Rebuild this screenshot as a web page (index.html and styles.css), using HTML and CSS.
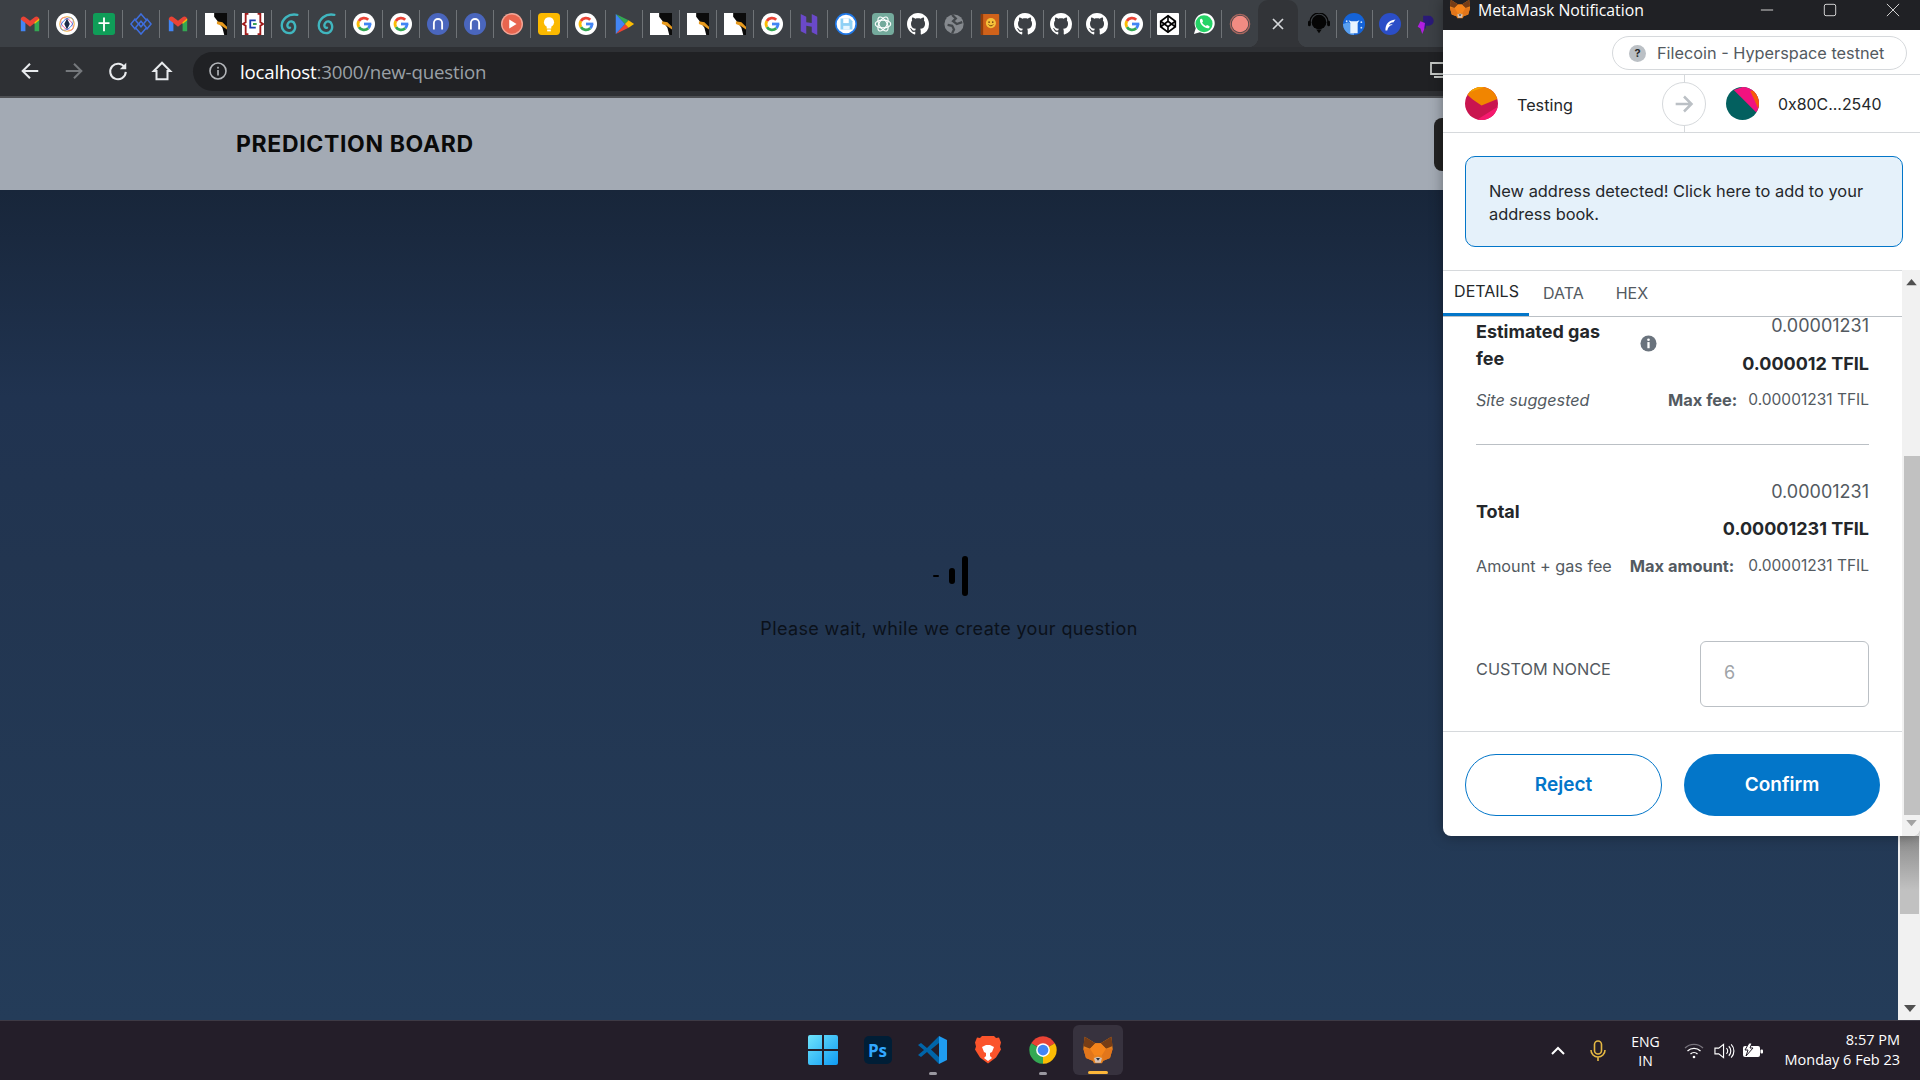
FILE: index.html
```html
<!DOCTYPE html>
<html lang="en">
<head>
<meta charset="utf-8">
<title>Prediction Board</title>
<link rel="stylesheet" href="styles.css">
</head>
<body>
<svg class="defs" aria-hidden="true">
  <symbol id="gm" viewBox="0 0 24 24"><path d="M2 20V6l5 4v10z" fill="#4285f4"/><path d="M17 20V10l5-4v14z" fill="#34a853"/><path d="M2 7c0-3 3-4 5-2.5l5 4 5-4C19 3 22 4 22 7l-5 4-5 4-5-4z" fill="#ea4335"/><path d="M17 10l5-4v2l-5 4z" fill="#fbbc04"/></symbol>
  <symbol id="multi" viewBox="0 0 24 24"><circle cx="12" cy="12" r="12" fill="#fff"/><ellipse cx="12" cy="12" rx="8.5" ry="5" fill="none" stroke="#e65a9c" transform="rotate(45 12 12)"/><ellipse cx="12" cy="12" rx="8.5" ry="5" fill="none" stroke="#3f7de8" transform="rotate(-45 12 12)"/><circle cx="12" cy="12" r="8" fill="none" stroke="#f4b33f"/><path d="M12 6l3 6-3 6-3-6z" fill="#1c2b4a"/></symbol>
  <symbol id="cross" viewBox="0 0 24 24"><rect width="24" height="24" rx="3" fill="#0f9d58"/><path d="M11 5h2v5h5v2h-5v8h-2v-8H6v-2h5z" fill="#fff"/></symbol>
  <symbol id="diamond" viewBox="0 0 24 24"><g fill="none" stroke="#3f6fe0" stroke-width="1.6"><path d="M12 1l6 7-6 7-6-7z"/><path d="M12 9l6 7-6 7-6-7z"/><path d="M6 6l-5 6 5 6M18 6l5 6-5 6"/></g></symbol>
  <symbol id="gull" viewBox="0 0 24 24"><rect width="24" height="24" fill="#fff"/><path d="M10 0h14v24h-3l-2-8-3-4-3-4-3-4z" fill="#0b0b0b"/><path d="M13 9l6 1 5 5v3l-6-4-5-2z" fill="#e79a1e"/></symbol>
  <symbol id="brace" viewBox="0 0 24 24"><rect width="24" height="24" fill="#fff"/><path d="M7 1H4v9l-3 2 3 2v9h3M17 1h3v9l3 2-3 2v9h-3" fill="none" stroke="#a01a1a" stroke-width="2"/><path d="M15 8H9v8h6" fill="none" stroke="#1a3fb0" stroke-width="2"/><rect x="12" y="11" width="4" height="2" fill="#2c9a4a"/></symbol>
  <symbol id="swirl" viewBox="0 0 24 24"><path d="M20 2C10 0 3 7 3 14c0 5 4 8 8 8 5 0 8-5 6-10-1-3-5-4-7-1-2 3 0 6 2 5" fill="none" stroke="#40b6bf" stroke-width="2.6" stroke-linecap="round"/></symbol>
  <symbol id="g" viewBox="0 0 24 24"><circle cx="12" cy="12" r="12" fill="#fff"/><g fill="none" stroke-width="3"><path d="M18.5 12A6.5 6.5 0 0 1 16.6 16.6" stroke="#4285f4"/><path d="M16.6 16.6A6.5 6.5 0 0 1 6.4 15.3" stroke="#34a853"/><path d="M6.4 15.3A6.5 6.5 0 0 1 6.4 8.7" stroke="#fbbc04"/><path d="M6.4 8.7A6.5 6.5 0 0 1 16.6 7.4" stroke="#ea4335"/></g><rect x="12" y="10.5" width="8" height="3" fill="#4285f4"/></symbol>
  <symbol id="arch" viewBox="0 0 24 24"><circle cx="12" cy="12" r="12" fill="#4a66bd"/><path d="M7.5 18V11a4.5 4.5 0 0 1 9 0v7" fill="none" stroke="#fff" stroke-width="2"/></symbol>
  <symbol id="playred" viewBox="0 0 24 24"><circle cx="12" cy="12" r="12" fill="#f3a596"/><circle cx="12" cy="12" r="10.5" fill="#e8654f"/><path d="M9 7l8 5-8 5z" fill="#fff"/></symbol>
  <symbol id="bulb" viewBox="0 0 24 24"><rect width="24" height="24" rx="4" fill="#fbb900"/><circle cx="12" cy="10" r="5.5" fill="#fff"/><rect x="9.5" y="14" width="5" height="3" fill="#fff"/><rect x="10" y="18" width="4" height="2" fill="#fff"/></symbol>
  <symbol id="gplay" viewBox="0 0 24 24"><path d="M3 1l14 7-4 4z" fill="#34a853"/><path d="M3 23l10-11 4 4z" fill="#ea4335"/><path d="M17 8l6 4-6 4-4-4z" fill="#fbbc04"/><path d="M3 1v22l10-11z" fill="#4285f4"/></symbol>
  <symbol id="hh" viewBox="0 0 24 24"><path d="M3 1l6 3v6l6 1V1l6 3v9l-18-1zM3 12l18 1v11l-6-3v-6l-6-1v9l-6-3z" fill="#6a49c9"/></symbol>
  <symbol id="floppy" viewBox="0 0 24 24"><circle cx="12" cy="12" r="12" fill="#1f78e8"/><circle cx="12" cy="12" r="10.2" fill="#fff"/><path d="M6 6h10l3 3v9H6z" fill="#8fd0f5"/><rect x="9" y="6" width="6" height="5" fill="#fff"/><rect x="9" y="14" width="7" height="4" fill="#e7f6ff"/></symbol>
  <symbol id="gpt" viewBox="0 0 24 24"><rect width="24" height="24" rx="4" fill="#74aa9c"/><g fill="none" stroke="#fff" stroke-width="1.2"><ellipse cx="12" cy="12" rx="8.5" ry="4.2"/><ellipse cx="12" cy="12" rx="8.5" ry="4.2" transform="rotate(60 12 12)"/><ellipse cx="12" cy="12" rx="8.5" ry="4.2" transform="rotate(120 12 12)"/></g></symbol>
  <symbol id="gh" viewBox="0 0 16 16"><path fill="#fff" d="M8 0C3.58 0 0 3.58 0 8c0 3.54 2.29 6.53 5.47 7.59.4.07.55-.17.55-.38 0-.19-.01-.82-.01-1.49-2.01.37-2.53-.49-2.69-.94-.09-.23-.48-.94-.82-1.13-.28-.15-.68-.52-.01-.53.63-.01 1.08.58 1.23.82.72 1.21 1.87.87 2.33.66.07-.52.28-.87.51-1.07-1.78-.2-3.64-.89-3.64-3.95 0-.87.31-1.59.82-2.15-.08-.2-.36-1.02.08-2.12 0 0 .67-.21 2.2.82.64-.18 1.32-.27 2-.27.68 0 1.36.09 2 .27 1.53-1.04 2.2-.82 2.2-.82.44 1.1.16 1.92.08 2.12.51.56.82 1.27.82 2.15 0 3.07-1.87 3.75-3.65 3.95.29.25.54.73.54 1.48 0 1.07-.01 1.93-.01 2.2 0 .21.15.46.55.38A8.013 8.013 0 0016 8c0-4.42-3.58-8-8-8z"/></symbol>
  <symbol id="globe" viewBox="0 0 24 24"><circle cx="12" cy="12" r="10.5" fill="#85898e"/><path d="M10 2l4 4-3 3 4 3 6-2M5 13l5 1 2 4-2 4" fill="none" stroke="#43474b" stroke-width="2.5"/></symbol>
  <symbol id="book" viewBox="0 0 24 24"><rect x="2" y="1" width="20" height="23" rx="1" fill="#d0621a"/><rect x="2" y="1" width="2.5" height="23" fill="#8f3d0c"/><circle cx="13" cy="11" r="5.5" fill="#f6c23a"/><circle cx="11" cy="10" r=".9" fill="#6b3b10"/><circle cx="15" cy="10" r=".9" fill="#6b3b10"/><path d="M10.5 12.5c1 2 4 2 5 0" fill="none" stroke="#6b3b10"/></symbol>
  <symbol id="codepen" viewBox="0 0 24 24"><rect width="24" height="24" rx="1" fill="#fff"/><g fill="none" stroke="#000" stroke-width="1.8"><path d="M12 3l8 6v6l-8 6-8-6V9z"/><path d="M4 9l8 6 8-6M4 15l8-6 8 6M12 3v6M12 15v6"/></g></symbol>
  <symbol id="wa" viewBox="0 0 24 24"><path d="M1 23l2-6.5A11 11 0 1 1 7.500 21z" fill="#fff"/><circle cx="12" cy="11.800" r="9.300" fill="#25d366"/><path d="M8 6.500l1.800-.3 1.200 2.900-1 1.300c.9 1.800 2.200 3 4 3.800l1.300-1.200 2.800 1.400-.4 1.900c-4.800 1.500-12-5.300-9.700-9.800z" fill="#fff"/></symbol>
  <symbol id="rec" viewBox="0 0 24 24"><circle cx="12" cy="12" r="9" fill="#f28b82"/><circle cx="12" cy="12" r="10.500" fill="none" stroke="#a8665f" stroke-width="1.500"/></symbol>
  <symbol id="head" viewBox="0 0 24 24"><circle cx="12" cy="10" r="8" fill="#050505"/><path d="M2 13V10a10 10 0 0 1 20 0v3" fill="none" stroke="#050505" stroke-width="1.500"/><rect x="0" y="8.500" width="3" height="6" rx="1.500" fill="#050505"/><rect x="21" y="8.500" width="3" height="6" rx="1.500" fill="#050505"/><path d="M9 18h6l-3 4z" fill="#050505"/></symbol>
  <symbol id="llama" viewBox="0 0 24 24"><circle cx="12" cy="12" r="12" fill="#1463d8"/><path d="M0 12a12 12 0 0 0 12 12V14L6 10z" fill="#5aa0ef"/><path d="M8 22V11L6 8l3 1h6l3-1-2 3v11z" fill="#e8f4ff"/><circle cx="4" cy="9" r="1" fill="#cfe6ff"/><circle cx="20" cy="10" r="1" fill="#cfe6ff"/><circle cx="20" cy="16" r="1" fill="#cfe6ff"/></symbol>
  <symbol id="fin" viewBox="0 0 24 24"><circle cx="12" cy="12" r="12" fill="#2b4ec7"/><path d="M7 19c0-7 3-11 11-12-2 2-2 3-2 3-3 0-5 2-5 3 2-1 3-1 4 0-3 0-5 2-6 6z" fill="#fff"/></symbol>
  <symbol id="pp" viewBox="0 0 24 24"><path d="M10 3h6a5 5 0 0 1 0 11h-3v3h-3z" fill="#2a1a78"/><path d="M7 9l5 2-1 7-2 5-2-6-3-2z" fill="#b01ee0"/></symbol>
  <symbol id="fox" viewBox="0 0 24 24"><path d="M2 2l8 5h4l8-5 1 9-2 7-5 2-1 2H9l-1-2-5-2-2-7z" fill="#e8821e"/><path d="M2 2l8 5-4 4-5-2zM22 2l-8 5 4 4 5-2z" fill="#763d16"/><path d="M6 11l4-4h4l4 4-3 5H9z" fill="#f6851b"/><path d="M1 11l5 0 3 5-1 4-5-2zM23 11h-5l-3 5 1 4 5-2z" fill="#e2761b"/><path d="M9 18l3-1 3 1-1 3.500h-4z" fill="#d7c1b3"/><path d="M10.500 18h3L12 20z" fill="#233447"/></symbol>
</svg>

<div class="browser">
  <div class="tabstrip">
    <span class="tab"><svg class="fav"><use href="#gm"/></svg></span>
    <span class="tab"><svg class="fav"><use href="#multi"/></svg></span>
    <span class="tab"><svg class="fav"><use href="#cross"/></svg></span>
    <span class="tab"><svg class="fav"><use href="#diamond"/></svg></span>
    <span class="tab"><svg class="fav"><use href="#gm"/></svg></span>
    <span class="tab"><svg class="fav"><use href="#gull"/></svg></span>
    <span class="tab"><svg class="fav"><use href="#brace"/></svg></span>
    <span class="tab"><svg class="fav"><use href="#swirl"/></svg></span>
    <span class="tab"><svg class="fav"><use href="#swirl"/></svg></span>
    <span class="tab"><svg class="fav"><use href="#g"/></svg></span>
    <span class="tab"><svg class="fav"><use href="#g"/></svg></span>
    <span class="tab"><svg class="fav"><use href="#arch"/></svg></span>
    <span class="tab"><svg class="fav"><use href="#arch"/></svg></span>
    <span class="tab"><svg class="fav"><use href="#playred"/></svg></span>
    <span class="tab"><svg class="fav"><use href="#bulb"/></svg></span>
    <span class="tab"><svg class="fav"><use href="#g"/></svg></span>
    <span class="tab"><svg class="fav"><use href="#gplay"/></svg></span>
    <span class="tab"><svg class="fav"><use href="#gull"/></svg></span>
    <span class="tab"><svg class="fav"><use href="#gull"/></svg></span>
    <span class="tab"><svg class="fav"><use href="#gull"/></svg></span>
    <span class="tab"><svg class="fav"><use href="#g"/></svg></span>
    <span class="tab"><svg class="fav"><use href="#hh"/></svg></span>
    <span class="tab"><svg class="fav"><use href="#floppy"/></svg></span>
    <span class="tab tab-narrow"><svg class="fav"><use href="#gpt"/></svg></span>
    <span class="tab tab-narrow"><svg class="fav"><use href="#gh"/></svg></span>
    <span class="tab tab-narrow"><svg class="fav"><use href="#globe"/></svg></span>
    <span class="tab tab-narrow"><svg class="fav"><use href="#book"/></svg></span>
    <span class="tab tab-narrow"><svg class="fav"><use href="#gh"/></svg></span>
    <span class="tab tab-narrow"><svg class="fav"><use href="#gh"/></svg></span>
    <span class="tab tab-narrow"><svg class="fav"><use href="#gh"/></svg></span>
    <span class="tab tab-narrow"><svg class="fav"><use href="#g"/></svg></span>
    <span class="tab tab-narrow"><svg class="fav"><use href="#codepen"/></svg></span>
    <span class="tab tab-narrow"><svg class="fav"><use href="#wa"/></svg></span>
    <span class="tab tab-narrow tab-plain"><svg class="fav"><use href="#rec"/></svg></span>
    <span class="tab-active"><svg class="close-x" viewBox="0 0 14 14"><path d="M2 2l10 10M12 2L2 12" stroke="#d5d7da" stroke-width="1.700"/></svg></span>
    <span class="tab tab-after"><svg class="fav"><use href="#head"/></svg></span>
    <span class="tab tab-after"><svg class="fav"><use href="#llama"/></svg></span>
    <span class="tab tab-after"><svg class="fav"><use href="#fin"/></svg></span>
    <span class="tab tab-after"><svg class="fav"><use href="#pp"/></svg></span>
  </div>

  <div class="toolbar">
    <svg class="tool" viewBox="0 0 24 24"><path d="M21 12H4M12 4l-8 8 8 8" fill="none" stroke="#e8eaed" stroke-width="2.200"/></svg>
    <svg class="tool" viewBox="0 0 24 24"><path d="M3 12h17M12 4l8 8-8 8" fill="none" stroke="#75787c" stroke-width="2.200"/></svg>
    <svg class="tool" viewBox="0 0 24 24"><path d="M19.500 8.500A8.500 8.500 0 1 0 20.500 13" fill="none" stroke="#e8eaed" stroke-width="2.200"/><path d="M21 3v7h-7z" fill="#e8eaed"/></svg>
    <svg class="tool" viewBox="0 0 24 24"><path d="M12 3L3 12h3v9h12v-9h3z" fill="none" stroke="#e8eaed" stroke-width="2.200"/></svg>
    <div class="omnibox">
      <svg class="info" viewBox="0 0 20 20"><circle cx="10" cy="10" r="8" fill="none" stroke="#b4b7bb" stroke-width="1.600"/><rect x="9.200" y="9" width="1.600" height="5.500" fill="#b4b7bb"/><rect x="9.200" y="5.800" width="1.600" height="1.800" fill="#b4b7bb"/></svg>
      <span class="url"><span class="host">localhost</span>:3000/new-question</span>
      <svg class="cast" viewBox="0 0 20 20"><path d="M2 2h14v11H2zM5 16h9" fill="none" stroke="#c4c7c5" stroke-width="1.800"/></svg>
    </div>
  </div>

  <div class="viewport">
    <div class="page">
      <header class="app-header">
        <h1 class="brand">PREDICTION BOARD</h1>
        <span class="connect"></span>
      </header>
      <main class="app-main">
        <div class="spinner"><i class="bar bar-a"></i><i class="bar bar-b"></i><i class="bar bar-c"></i></div>
        <p class="wait">Please wait, while we create your question</p>
      </main>
    </div>
    <div class="page-scroll">
      <span class="page-thumb"></span>
      <svg class="page-arrow" viewBox="0 0 12 8"><path d="M0 0h12L6 7z" fill="#505050"/></svg>
    </div>
  </div>

  <footer class="taskbar">
    <div></div>
    <div class="task-apps">
      <span class="task-app">
        <svg class="task-icon" viewBox="0 0 30 30"><defs><linearGradient id="win" x1="0" y1="0" x2="1" y2="1"><stop offset="0" stop-color="#6fe4fb"/><stop offset="1" stop-color="#0f9bf3"/></linearGradient></defs><path d="M0 2a2 2 0 0 1 2-2h12v14H0zM16 0h12a2 2 0 0 1 2 2v12H16zM0 16h14v14H2a2 2 0 0 1-2-2zM16 16h14v12a2 2 0 0 1-2 2H16z" fill="url(#win)"/></svg>
      </span>
      <span class="task-app"><span class="ps">Ps</span></span>
      <span class="task-app task-running">
        <svg class="task-icon" viewBox="0 0 30 30"><path d="M21 1l8 4v20l-8 4z" fill="#1f9cf0"/><path d="M21 1L9 13 3 8 0 10l6 5-6 5 3 2 6-5 12 12 0-7-8-7.500L21 8z" fill="#0065a9"/></svg>
      </span>
      <span class="task-app">
        <svg class="task-icon" viewBox="0 0 30 30"><path d="M9 1h12l2 2 3-.500 2 5-1 4 1 3-5 8-8 6-8-6-5-8 1-3-1-4 2-5 3 .500z" fill="#fb542b"/><path d="M9 12l4-2h4l4 2-2 5-2 1v3l2 2-4 3-4-3 2-2v-3l-2-1z" fill="#fff"/></svg>
      </span>
      <span class="task-app task-running">
        <svg class="task-icon" viewBox="0 0 24 24"><path d="M12 12L2.500 6.500A11 11 0 0 1 21.500 6.500Z" fill="#ea4335"/><path d="M12 12L21.500 6.500A11 11 0 0 1 12 23Z" fill="#fbbc04"/><path d="M12 12L12 23A11 11 0 0 1 2.500 6.500Z" fill="#34a853"/><circle cx="12" cy="12" r="5.500" fill="#fff"/><circle cx="12" cy="12" r="4.300" fill="#4285f4"/></svg>
      </span>
      <span class="task-app task-active">
        <svg class="task-icon task-fox"><use href="#fox"/></svg>
      </span>
    </div>
    <div class="tray">
      <svg class="tray-icon chevron" viewBox="0 0 16 16"><path d="M2 11l6-6 6 6" fill="none" stroke="#fff" stroke-width="2"/></svg>
      <svg class="tray-icon mic" viewBox="0 0 20 24"><rect x="6.500" y="2" width="7" height="13" rx="3.500" fill="none" stroke="#e5b843" stroke-width="1.600"/><path d="M3 11a7 7 0 0 0 14 0M10 18v4" fill="none" stroke="#e5b843" stroke-width="1.600"/></svg>
      <span class="lang">ENG<br>IN</span>
      <svg class="tray-icon wifi" viewBox="0 0 20 16"><path d="M1 5a13 13 0 0 1 18 0" fill="none" stroke="#77737c" stroke-width="1.300"/><path d="M3.500 8a9.500 9.500 0 0 1 13 0M6.500 11a5 5 0 0 1 7 0" fill="none" stroke="#fff" stroke-width="1.300"/><circle cx="10" cy="14" r="1.300" fill="#fff"/></svg>
      <svg class="tray-icon speaker" viewBox="0 0 22 18"><path d="M1 6h4l5-4v14l-5-4H1z" fill="none" stroke="#fff" stroke-width="1.200"/><path d="M13 6a4 4 0 0 1 0 6M15.500 4a7 7 0 0 1 0 10M18 2a10 10 0 0 1 0 14" fill="none" stroke="#fff" stroke-width="1.200"/></svg>
      <svg class="tray-icon battery" viewBox="0 0 22 16"><rect x="1" y="3" width="17" height="11" rx="2" fill="#fff"/><rect x="18.500" y="6.500" width="2.500" height="4" rx="1" fill="#fff"/><path d="M7 0L3 7h3l-2 6 7-8H8l2-5z" fill="#fff" stroke="#231d28"/></svg>
      <div class="clock"><span>8:57 PM</span><span>Monday 6 Feb 23</span></div>
    </div>
  </footer>
</div>

<section class="popup">
  <div class="titlebar">
    <svg class="title-fox"><use href="#fox"/></svg>
    <span class="title-text">MetaMask Notification</span>
    <div class="win-btns">
      <svg class="win-btn" viewBox="0 0 16 16"><path d="M1 8h14" stroke="#e8e8e8" stroke-width="1"/></svg>
      <svg class="win-btn" viewBox="0 0 16 16"><rect x="1.500" y="1.500" width="13" height="13" rx="2" fill="none" stroke="#e8e8e8"/></svg>
      <svg class="win-btn" viewBox="0 0 16 16"><path d="M1 1l14 14M15 1L1 15" stroke="#e8e8e8"/></svg>
    </div>
  </div>
  <div class="network-row">
    <div class="network-pill"><span class="q">?</span><span>Filecoin - Hyperspace testnet</span></div>
  </div>
  <div class="accounts">
    <div class="acct acct-from">
      <svg class="avatar" viewBox="0 0 34 34"><defs><clipPath id="c1"><circle cx="17" cy="17" r="17"/></clipPath></defs><g clip-path="url(#c1)"><rect width="34" height="34" fill="#c9154f"/><path d="M0 0h34v12L17 19 8 13 0 6z" fill="#f18500"/><path d="M0 0h20L6 5 0 9z" fill="#f5a800"/><path d="M0 34h34V20L12 34z" fill="#f5196e"/></g></svg>
      <span>Testing</span>
    </div>
    <div class="acct acct-to">
      <svg class="avatar" viewBox="0 0 34 34"><defs><clipPath id="c2"><circle cx="17" cy="17" r="17"/></clipPath></defs><g clip-path="url(#c2)"><rect width="34" height="34" fill="#03605f"/><path d="M8 3L17 0h17v26h-3z" fill="#f2127f"/><path d="M25 4l9-2v22z" fill="#f75a0a"/></g></svg>
      <span>0x80C...2540</span>
    </div>
    <span class="arrow-line"></span>
    <span class="arrow-circle"><svg class="arrow" viewBox="0 0 24 24"><path d="M2 12h19M12 3l9 9-9 9" fill="none" stroke="#bbc0c5" stroke-width="3"/></svg></span>
  </div>
  <div class="alert-wrap">
    <div class="alert">New address detected! Click here to add to your address book.</div>
  </div>
  <div class="lower">
    <div class="lower-main">
      <nav class="tabs">
        <span class="ptab ptab-on">DETAILS</span>
        <span class="ptab ptab-data">DATA</span>
        <span class="ptab ptab-hex">HEX</span>
      </nav>
      <div class="details">
        <div class="fee-row">
          <span class="fee-label">Estimated gas fee</span>
          <svg class="fee-info" viewBox="0 0 18 18"><circle cx="9" cy="9" r="8.500" fill="#6a737d"/><rect x="7.800" y="7.500" width="2.400" height="6.500" fill="#fff"/><circle cx="9" cy="5" r="1.400" fill="#fff"/></svg>
          <div class="amounts"><span class="val">0.00001231</span><span class="val-strong">0.000012 TFIL</span></div>
        </div>
        <div class="sub-row">
          <em class="sub-note">Site suggested</em>
          <span class="max"><b>Max fee:</b><span>0.00001231 TFIL</span></span>
        </div>
        <hr class="divider">
        <div class="total-row">
          <span class="fee-label">Total</span>
          <div class="amounts"><span class="val">0.00001231</span><span class="val-strong">0.00001231 TFIL</span></div>
        </div>
        <div class="sub-row sub-row-total">
          <span class="sub-note">Amount + gas fee</span>
          <span class="max max-total"><b>Max amount:</b><span>0.00001231 TFIL</span></span>
        </div>
        <div class="nonce-row">
          <span class="nonce-label">CUSTOM NONCE</span>
          <span class="nonce-input">6</span>
        </div>
      </div>
      <div class="actions">
        <button class="btn btn-reject">Reject</button>
        <button class="btn btn-confirm">Confirm</button>
      </div>
    </div>
    <div class="pop-scroll">
      <svg class="pop-arrow" viewBox="0 0 12 8"><path d="M0 7h12L6 0z" fill="#505050"/></svg>
      <span class="pop-thumb"></span>
      <svg class="pop-arrow" viewBox="0 0 12 8"><path d="M0 0h12L6 7z" fill="#a3a3a3"/></svg>
    </div>
  </div>
</section>
</body>
</html>
```

FILE: styles.css
```css
* { box-sizing: border-box; }
html, body { margin: 0; height: 100%; overflow: hidden; }
body { font-family: "Inter", "Liberation Sans", sans-serif; background: #1b2a3e; }
.defs { position: absolute; width: 0; height: 0; }

.browser { display: flex; flex-direction: column; height: 1080px; }

/* tab strip */
.tabstrip { height: 47px; flex: none; display: flex; align-items: center; padding-left: 12px; padding-top: 1px; background: #3c4045; }
.tab { flex: none; width: 37.1px; height: 28px; display: flex; align-items: center; justify-content: center; border-right: 1.5px solid #6f7377; }
.tab-narrow { width: 35.7px; }
.tab-after { width: 35.5px; }
.tab-plain { border-right: 0; }
.fav { width: 22px; height: 22px; display: block; }
.tab-active { position: relative; flex: none; align-self: flex-end; width: 40px; height: 47px; margin: -1px 4px 0 0; display: flex; align-items: center; justify-content: center; background: #323438; border-radius: 10px 10px 0 0; }
.tab-active::before, .tab-active::after { content: ""; position: absolute; bottom: 0; width: 10px; height: 10px; }
.tab-active::before { left: -10px; background: radial-gradient(circle at 0 0, transparent 10px, #323438 10.5px); }
.tab-active::after { right: -10px; background: radial-gradient(circle at 100% 0, transparent 10px, #323438 10.5px); }
.close-x { width: 14px; height: 14px; }

/* toolbar */
.toolbar { height: 51px; flex: none; display: flex; align-items: center; padding-left: 19px; padding-bottom: 1px; background: #2e3034; border-bottom: 2px solid #4d4f53; }
.tool { width: 22px; height: 22px; flex: none; margin-right: 22px; }
.omnibox { flex: 1; height: 39px; margin-left: -2px; padding: 0 471px 0 15px; display: flex; align-items: center; background: #202124; border-radius: 20px 0 0 20px; }
.info { width: 20px; height: 20px; flex: none; }
.url { margin-left: 12px; font-family: "Open Sans", sans-serif; font-size: 18.7px; color: #9aa0a6; letter-spacing: -0.2px; }
.host { color: #fff; }
.cast { margin-left: auto; width: 20px; height: 20px; flex: none; }

/* page */
.viewport { flex: 1; min-height: 0; display: flex; }
.page { flex: 1; display: flex; flex-direction: column; min-width: 0; }
.app-header { height: 92px; flex: none; display: flex; align-items: center; justify-content: space-between; padding: 0 364px 0 236px; background: #a3aab4; }
.brand { margin: 0; font-size: 23px; font-weight: 700; color: #0a0a0a; letter-spacing: 0.65px; }
.connect { width: 100px; height: 53px; background: #232323; border-radius: 8px; }
.app-main { flex: 1; display: flex; flex-direction: column; align-items: center; justify-content: center; padding-bottom: 13px; background: linear-gradient(#18263a, #203350 25%, #223550 45%, #243c59); }
.spinner { display: flex; align-items: center; height: 40px; margin-left: 3px; }
.bar { display: block; width: 6px; background: #000; border-radius: 3px; }
.bar-a { height: 2px; margin-right: 10px; }
.bar-b { height: 16px; margin-right: 7px; }
.bar-c { height: 40px; }
.wait { margin: 21px 0 0; font-size: 18px; color: #0b111a; letter-spacing: 0.37px; line-height: 24px; }
.page-scroll { width: 22px; flex: none; display: flex; flex-direction: column; align-items: center; justify-content: space-between; padding: 738px 0 7px 1px; background: #f1f1f1; }
.page-thumb { width: 19px; height: 78px; background: linear-gradient(#8a8a8a, #c1c1c1 70%); }
.page-arrow { width: 12px; height: 8px; }

/* taskbar */
.taskbar { height: 60px; flex: none; display: grid; grid-template-columns: 1fr auto 1fr; align-items: center; background: #241e29; border-top: 1px solid #3d3a45; font-family: "Open Sans", sans-serif; color: #fff; }
.task-apps { display: flex; align-items: center; margin-bottom: 1px; }
.task-app { position: relative; width: 55px; height: 50px; display: flex; align-items: center; justify-content: center; }
.task-icon { width: 30px; height: 30px; display: block; }
.task-running::after, .task-active::after { content: ""; position: absolute; left: 50%; bottom: 0; transform: translateX(-50%); width: 8px; height: 3px; border-radius: 2px; background: #9a98a0; }
.task-active { width: 50px; margin: 0 2px 0 3px; background: #37323e; border-radius: 6px; }
.task-active::after { width: 20px; background: #fbb63a; bottom: 1px; }
.task-fox { width: 32px; height: 32px; }
.ps { width: 28px; height: 28px; display: flex; align-items: center; justify-content: center; background: #001e36; border-radius: 5px; color: #31a8ff; font: 700 17px "Open Sans", sans-serif; }
.tray { display: flex; align-items: center; justify-self: end; height: 100%; padding-right: 20px; }
.tray-icon { flex: none; display: block; }
.chevron { width: 16px; height: 16px; margin-right: 22px; }
.mic { width: 20px; height: 24px; margin-right: 12px; }
.lang { width: 50px; text-align: center; font-size: 14px; line-height: 19px; margin-right: 14px; }
.wifi { width: 20px; height: 16px; margin-right: 10px; }
.speaker { width: 21px; height: 18px; margin-right: 7px; }
.battery { width: 22px; height: 16px; margin-right: 20px; }
.clock { display: flex; flex-direction: column; align-items: flex-end; padding-bottom: 2px; font-size: 14.5px; line-height: 20px; }

/* popup window */
.popup { position: absolute; left: 1443px; top: 0; width: 477px; height: 836px; display: flex; flex-direction: column; background: #fff; border-radius: 0 0 8px 8px; overflow: hidden; box-shadow: 0 0 14px rgba(0, 0, 0, .35); color: #24272a; font-size: 16px; }
.titlebar { height: 30px; flex: none; display: flex; align-items: flex-start; background: #202125; color: #fff; }
.title-fox { width: 22px; height: 22px; margin: -2px 0 0 6px; flex: none; }
.title-text { margin-left: 7px; font-family: "Open Sans", sans-serif; font-size: 15.8px; line-height: 20px; }
.win-btns { margin-left: auto; display: flex; gap: 49px; padding: 3px 20px 0 0; }
.win-btn { width: 14px; height: 14px; display: block; }
.network-row { height: 45px; flex: none; display: flex; justify-content: flex-end; align-items: flex-start; padding: 6px 13px 0 0; border-bottom: 1px solid #d6d9dc; }
.network-pill { width: 295px; height: 34px; display: flex; align-items: center; gap: 11px; padding-left: 16px; border: 1px solid #d6d9dc; border-radius: 17px; color: #535a61; font-size: 16.3px; }
.q { width: 17px; height: 17px; flex: none; display: flex; align-items: center; justify-content: center; background: #bbc0c5; border-radius: 50%; color: #24272a; font-size: 11px; font-weight: 700; }
.accounts { position: relative; height: 58px; flex: none; display: flex; border-bottom: 1px solid #d6d9dc; }
.acct { display: flex; align-items: center; gap: 19px; font-size: 16.2px; }
.acct span { padding-top: 2px; }
.acct-from { width: 241px; padding-left: 22px; }
.acct-to { padding-left: 42px; font-size: 15.9px; }
.avatar { width: 33px; height: 33px; flex: none; }
.arrow-line { position: absolute; left: 241px; top: 0; bottom: 0; width: 1px; background: #d6d9dc; }
.arrow-circle { position: absolute; left: 219px; top: 7px; width: 44px; height: 44px; display: flex; align-items: center; justify-content: center; background: #fff; border: 1px solid #d6d9dc; border-radius: 50%; }
.arrow { width: 20px; height: 20px; }
.alert-wrap { height: 137px; flex: none; padding: 23px 17px 23px 22px; }
.alert { height: 91px; display: flex; align-items: center; padding: 2px 23px 0; background: #e5f1fa; border: 1px solid #0376c9; border-radius: 10px; font-size: 16.4px; line-height: 23px; }
.lower { flex: 1; min-height: 0; display: flex; }
.lower-main { flex: 1; min-width: 0; display: flex; flex-direction: column; border-top: 1px solid #d6d9dc; }
.tabs { height: 46px; flex: none; display: flex; border-bottom: 1px solid #bbc0c5; font-size: 16px; color: #535a61; }
.ptab { display: flex; align-items: center; height: 45px; padding-bottom: 2px; }
.ptab-on { width: 86px; justify-content: center; padding-left: 1px; color: #24272a; border-bottom: 3px solid #0376c9; }
.ptab-data { margin-left: 14px; }
.ptab-hex { margin-left: 32px; }
.details { flex: 1; min-height: 0; margin-top: -1px; padding: 0 33px; }
.fee-row { display: flex; position: relative; }
.fee-label { font-size: 18px; font-weight: 700; color: #24272a; line-height: 27px; }
.fee-row .fee-label { width: 140px; padding-top: 2px; }
.fee-info { width: 17px; height: 17px; flex: none; margin: 19px 0 0 24px; }
.amounts { margin-left: auto; display: flex; flex-direction: column; align-items: flex-end; gap: 14.500px; }
.val { font-size: 18px; line-height: 20px; color: #535a61; }
.val-strong { font-size: 18px; font-weight: 700; line-height: 26px; color: #24272a; }
.sub-row { display: flex; justify-content: space-between; margin-top: 13px; font-size: 15.5px; line-height: 20px; color: #535a61; }
.sub-note { font-size: 16.2px; font-style: italic; }
.sub-row-total { margin-top: 14px; }
.sub-row-total .sub-note { font-style: normal; }
.max { display: flex; gap: 11px; }
.max-total { gap: 14px; }
.max b { font-size: 16.4px; font-weight: 700; }
.divider { height: 1px; margin: 34px 0 0; border: 0; background: #bbc0c5; }
.total-row { display: flex; align-items: center; margin-top: 37px; }
.nonce-row { display: flex; justify-content: space-between; align-items: center; margin-top: 65px; }
.nonce-label { font-size: 16.3px; color: #535a61; margin-bottom: 10px; }
.nonce-input { width: 169px; height: 66px; display: flex; align-items: center; padding: 0 0 4px 23px; border: 1px solid #bbc0c5; border-radius: 6px; color: #a0a4a8; font-size: 18px; }
.actions { height: 105px; flex: none; display: flex; gap: 22px; padding: 22px 0 0 22px; border-top: 1px solid #d6d9dc; }
.btn { width: 197px; height: 62px; padding: 0 0 2px; border-radius: 31px; font: 600 19px "Inter", sans-serif; }
.btn-reject { background: #fff; color: #0376c9; border: 1px solid #0376c9; }
.btn-confirm { width: 196px; background: #0376c9; color: #fff; border: 0; }
.pop-scroll { width: 18px; flex: none; display: flex; flex-direction: column; align-items: flex-end; padding-top: 9px; background: #f1f1f1; }
.pop-arrow { width: 11px; height: 7px; margin-right: 3px; flex: none; }
.pop-thumb { width: 16px; height: 359px; margin-top: 170px; margin-bottom: 5px; background: #c1c1c1; }
```
